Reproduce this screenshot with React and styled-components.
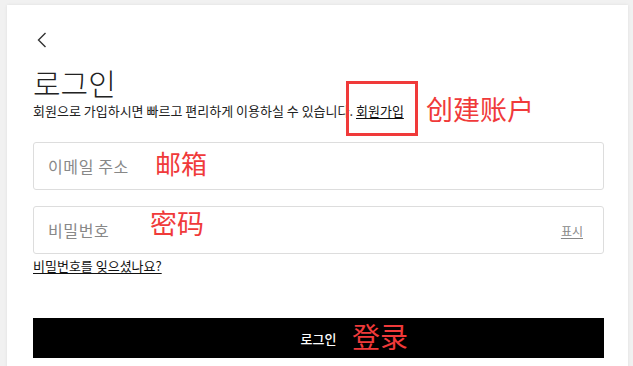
import React from 'react';
import styled, { createGlobalStyle } from 'styled-components';

const GlobalStyle = createGlobalStyle`
    html, body {
        margin: 0;
        padding: 0;
        background: #f1f1f1;
        font-family: "Noto Sans CJK KR", "Noto Sans", sans-serif;
        color: #222;
    }
    * { box-sizing: border-box; }
`;

const Page = styled.div`
    padding: 5px 5px 0 7px;
    height: 366px;
    overflow: hidden;
`;

const Card = styled.main`
    position: relative;
    background: #fff;
    box-shadow: 0 0 3px rgba(0, 0, 0, 0.08);
    min-height: 400px;
    padding: 27px 24px 0 26px;
    display: flex;
    flex-direction: column;
`;

const BackButton = styled.button`
    display: flex;
    align-items: center;
    width: 20px;
    height: 16px;
    padding: 0 0 0 4px;
    border: 0;
    background: none;
    cursor: pointer;
`;

const Title = styled.h1`
    margin: 16px 0 0;
    font-size: 30px;
    line-height: 36px;
    font-weight: 300;
    color: #222;
`;

const Lead = styled.p`
    margin: 2px 0 0;
    font-size: 13px;
    line-height: 18px;
    color: #222;
`;

const TextLink = styled.a`
    color: ${({ $muted }) => ($muted ? '#888' : '#111')};
    text-decoration: underline;
    text-underline-offset: 2px;
    font-size: ${({ $size }) => $size || 13}px;
    cursor: pointer;
`;

const Form = styled.form`
    margin-top: 22px;
    display: flex;
    flex-direction: column;
    gap: 16px;
`;

const Field = styled.label`
    display: flex;
    align-items: center;
    height: 48px;
    padding: 0 20px 0 14px;
    border: 1px solid #ddd;
    border-radius: 3px;
`;

const Input = styled.input`
    flex: 1;
    border: 0;
    outline: none;
    font-family: inherit;
    font-size: 16px;
    letter-spacing: 0.6px;
    color: #222;
    background: transparent;
    padding: 0;

    &::placeholder {
        color: #888;
    }
`;

const Forgot = styled.div`
    margin-top: 2px;
    line-height: 17px;
`;

const Submit = styled.button`
    margin-top: 44px;
    height: 40px;
    border: 0;
    background: #000;
    color: #fff;
    font-family: inherit;
    font-size: 13px;
    font-weight: 500;
    cursor: pointer;
`;

const Note = styled.span`
    position: absolute;
    left: ${({ $x }) => $x}px;
    top: ${({ $y }) => $y}px;
    font-family: "Noto Sans CJK SC", sans-serif;
    font-size: ${({ $size }) => $size || 27}px;
    line-height: 1;
    color: #f03a3a;
    white-space: nowrap;
    pointer-events: none;
`;

const Marker = styled.span`
    position: absolute;
    left: 339px;
    top: 76px;
    width: 72px;
    height: 55px;
    border: 3px solid #f03a3a;
    pointer-events: none;
`;

const ChevronLeft = () => (
    <svg width="10" height="16" viewBox="0 0 10 16" fill="none">
        <polyline points="8.5,1 1.5,8 8.5,15" stroke="#333" strokeWidth="1.4" />
    </svg>
);

export default function App() {
    return (
        <Page>
            <GlobalStyle />
            <Card>
                <BackButton aria-label="back">
                    <ChevronLeft />
                </BackButton>
                <Title>로그인</Title>
                <Lead>
                    회원으로 가입하시면 빠르고 편리하게 이용하실 수 있습니다. <TextLink>회원가입</TextLink>
                </Lead>
                <Form onSubmit={(e) => e.preventDefault()}>
                    <Field>
                        <Input type="email" placeholder="이메일 주소" />
                    </Field>
                    <Field>
                        <Input type="password" placeholder="비밀번호" />
                        <TextLink $muted $size={12}>표시</TextLink>
                    </Field>
                </Form>
                <Forgot>
                    <TextLink $size={13}>비밀번호를 잊으셨나요?</TextLink>
                </Forgot>
                <Submit>로그인</Submit>

                <Marker />
                <Note $x={419} $y={90}>创建账户</Note>
                <Note $x={148} $y={145} $size={26}>邮箱</Note>
                <Note $x={143} $y={204}>密码</Note>
                <Note $x={345} $y={317} $size={28}>登录</Note>
            </Card>
        </Page>
    );
}
